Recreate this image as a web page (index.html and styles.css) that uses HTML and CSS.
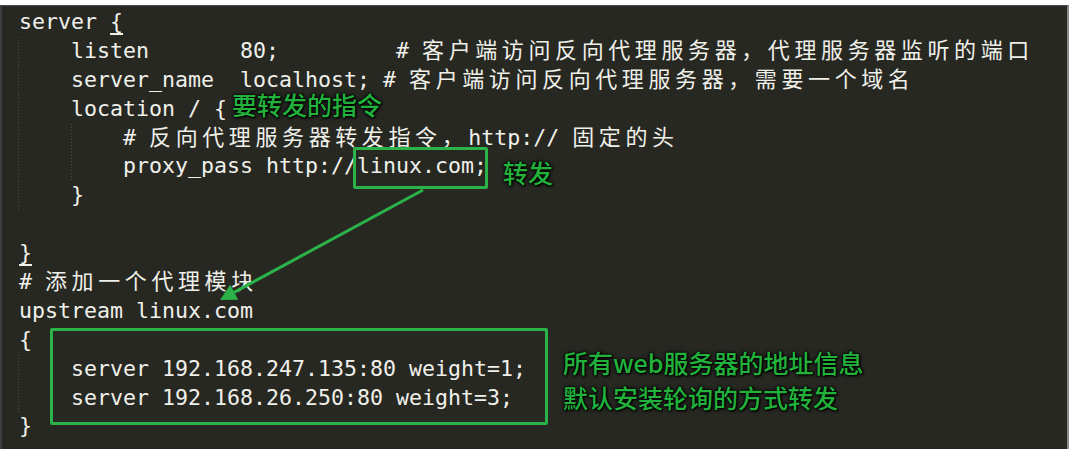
FILE: index.html
```html
<!DOCTYPE html>
<html lang="zh">
<head>
<meta charset="utf-8">
<title>nginx upstream</title>
<link rel="stylesheet" href="styles.css">
</head>
<body>
<div class="editor">
  <div class="code">
    <div class="ln">server <span class="match">{</span></div>
    <div class="ln"><span class="ind g1">    </span>listen       80;         # <span class="zh">客户端访问反向代理服务器，代理服务器监听的端口</span></div>
    <div class="ln"><span class="ind g1">    </span>server_name  localhost; # <span class="zh">客户端访问反向代理服务器，需要一个域名</span></div>
    <div class="ln"><span class="ind g1">    </span>location / {</div>
    <div class="ln"><span class="ind g2">        </span># <span class="zh">反向代理服务器转发指令，</span>http:// <span class="zh">固定的头</span></div>
    <div class="ln"><span class="ind g2">        </span>proxy_pass http://linux.com;</div>
    <div class="ln"><span class="ind g1">    </span>}</div>
    <div class="ln"> </div>
    <div class="ln"><span class="match">}</span></div>
    <div class="ln"># <span class="zh">添加一个代理模块</span></div>
    <div class="ln">upstream linux.com</div>
    <div class="ln">{</div>
    <div class="ln"><span class="ind g1">    </span>server 192.168.247.135:80 weight=1;</div>
    <div class="ln"><span class="ind g1">    </span>server 192.168.26.250:80 weight=3;</div>
    <div class="ln">}</div>
  </div>

  <div class="box box-target"></div>
  <div class="box box-servers"></div>

  <svg class="arrow" width="1070" height="449" viewBox="0 0 1070 449">
    <line x1="423" y1="190" x2="234" y2="292.4" stroke="#2bb34a" stroke-width="3"/>
    <polygon points="220,300 238.2,299.8 230.2,284.8" fill="#2bb34a"/>
  </svg>

  <div class="note note-directive">要转发的指令</div>
  <div class="note note-forward">转发</div>
  <div class="note note-servers">所有web服务器的地址信息<br>默认安装轮询的方式转发</div>
</div>
</body>
</html>
```

FILE: styles.css
```css
html, body {
  margin: 0;
  padding: 0;
  background: #ffffff;
}

.editor {
  position: relative;
  box-sizing: border-box;
  width: 1069px;
  height: 444px;
  margin-top: 5px;
  background: #272822;
  border-top: 1px solid #4a4d52;
  border-left: 2px solid #3b3e40;
  border-right: 2px solid #8d8d8d;
  overflow: hidden;
}

.code {
  padding: 2px 0 0 17px;
  font-family: "DejaVu Sans Mono", "Noto Sans CJK SC", monospace;
  font-size: 21.6px;
  color: #f0f0ea;
}

.ln {
  height: 28.9px;
  line-height: 28.9px;
  white-space: pre;
}

.zh {
  font-family: "Noto Sans CJK SC", sans-serif;
  font-size: 22px;
  letter-spacing: 4.6px;
  line-height: 0;
}

.match {
  text-decoration: underline;
  text-decoration-thickness: 1.5px;
  text-underline-offset: 4px;
}

.ind {
  display: inline-block;
  vertical-align: top;
  height: 28.9px;
  margin-left: -1px;
  padding-left: 1px;
}

.g1 {
  background-image: repeating-linear-gradient(to bottom, #4e4f48 0 1px, transparent 1px 3px);
  background-repeat: no-repeat;
  background-size: 1px 100%;
  background-position: 0 0;
}

.g2 {
  background-image:
    repeating-linear-gradient(to bottom, #4e4f48 0 1px, transparent 1px 3px),
    repeating-linear-gradient(to bottom, #4e4f48 0 1px, transparent 1px 3px);
  background-repeat: no-repeat, no-repeat;
  background-size: 1px 100%, 1px 100%;
  background-position: 0 0, 53px 0;
}

.box {
  position: absolute;
  box-sizing: border-box;
  border: 3px solid #2bb34a;
  border-radius: 2px;
}

.box-target {
  left: 351px;
  top: 141px;
  width: 135px;
  height: 42px;
}

.box-servers {
  left: 48px;
  top: 322px;
  width: 498px;
  height: 97px;
}

.arrow {
  position: absolute;
  left: -2px;
  top: -6px;
}

.note {
  position: absolute;
  font-family: "Noto Sans CJK SC", sans-serif;
  font-size: 25px;
  font-weight: 500;
  line-height: 25px;
  color: #22b23c;
  white-space: nowrap;
  text-shadow: 0 0 1px #000, 0 0 2px #000, 1px 1px 2px #000, 0 0 4px #000;
}

.note-directive {
  left: 230px;
  top: 86px;
}

.note-forward {
  left: 501px;
  top: 154px;
}

.note-servers {
  left: 561px;
  top: 339px;
  line-height: 35px;
}
```
